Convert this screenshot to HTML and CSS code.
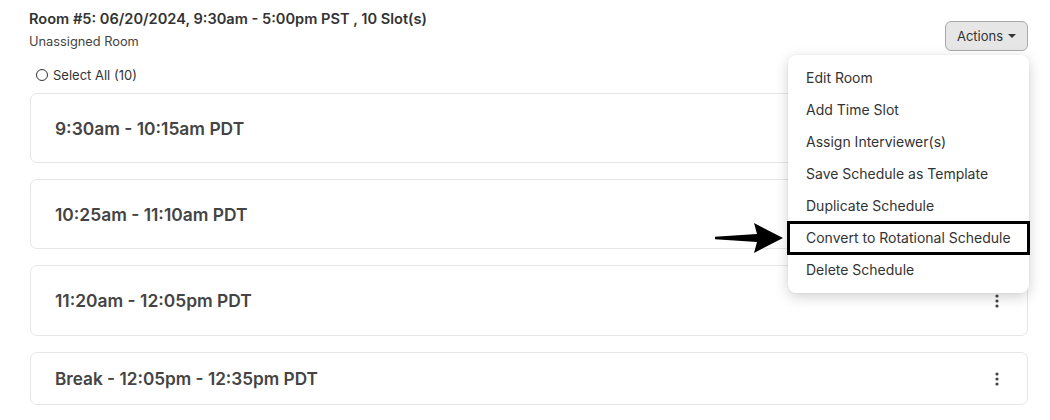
FILE: index.html
```html
<!DOCTYPE html>
<html lang="en">
<head>
  <meta charset="UTF-8" />
  <title>Room Schedule</title>
  <link rel="stylesheet" href="styles.css">
</head>
<body>

  <div class="room">
    <div class="room-head">
      <div class="room-info">
        <h3>Room #5: 06/20/2024, 9:30am - 5:00pm PST , 10 Slot(s)</h3>
        <div class="room-sub">Unassigned Room</div>
      </div>
      <button class="actions-btn">Actions <span class="caret"></span></button>
    </div>

    <label class="select-all"><span class="radio"></span> Select All (10)</label>

    <div class="slots">
      <div class="slot">
        <span>9:30am - 10:15am PDT</span>
        <svg class="kebab" width="4" height="14" viewBox="0 0 4 14"><circle cx="2" cy="2" r="1.6"/><circle cx="2" cy="7" r="1.6"/><circle cx="2" cy="12" r="1.6"/></svg>
      </div>
      <div class="slot">
        <span>10:25am - 11:10am PDT</span>
        <svg class="kebab" width="4" height="14" viewBox="0 0 4 14"><circle cx="2" cy="2" r="1.6"/><circle cx="2" cy="7" r="1.6"/><circle cx="2" cy="12" r="1.6"/></svg>
      </div>
      <div class="slot">
        <span>11:20am - 12:05pm PDT</span>
        <svg class="kebab" width="4" height="14" viewBox="0 0 4 14"><circle cx="2" cy="2" r="1.6"/><circle cx="2" cy="7" r="1.6"/><circle cx="2" cy="12" r="1.6"/></svg>
      </div>
      <div class="slot slot-break">
        <span>Break - 12:05pm - 12:35pm PDT</span>
        <svg class="kebab" width="4" height="14" viewBox="0 0 4 14"><circle cx="2" cy="2" r="1.6"/><circle cx="2" cy="7" r="1.6"/><circle cx="2" cy="12" r="1.6"/></svg>
      </div>
    </div>

    <!-- open actions menu -->
    <ul class="menu">
      <li>Edit Room</li>
      <li>Add Time Slot</li>
      <li>Assign Interviewer(s)</li>
      <li>Save Schedule as Template</li>
      <li>Duplicate Schedule</li>
      <li class="marked">Convert to Rotational Schedule</li>
      <li>Delete Schedule</li>
    </ul>

    <!-- annotation arrow -->
    <svg class="pointer" width="70" height="32" viewBox="0 0 70 32">
      <path d="M0 14.8 L42 12 L39 1 L68 16 L39 31 L42 20 L0 17.2 Z" fill="#000"/>
    </svg>
  </div>

</body>
</html>
```

FILE: styles.css
```css
* {
  margin: 0;
  padding: 0;
  box-sizing: border-box;
}

body {
  font-family: Inter, 'Noto Sans', sans-serif;
  background: #fff;
  color: #333;
}

.room {
  position: relative;
  padding: 10px 22px 0 30px;
}

.room-head {
  display: flex;
  justify-content: space-between;
  align-items: flex-start;
}

.room-info h3 {
  font-size: 14.6px;
  font-weight: 600;
  color: #333;
  margin-left: -1px;
  line-height: 18px;
}

.room-sub {
  font-size: 12.8px;
  color: #444;
  margin-top: 6px;
  margin-left: -1px;
}

.actions-btn {
  margin-top: 11px;
  width: 83px;
  height: 30px;
  background: #e6e6e6;
  border: 1px solid #a9a9a9;
  border-radius: 6px;
  font-family: inherit;
  font-size: 13px;
  color: #333;
  display: flex;
  align-items: center;
  justify-content: center;
  gap: 5px;
}

.caret {
  width: 0;
  height: 0;
  border-left: 4px solid transparent;
  border-right: 4px solid transparent;
  border-top: 4px solid #333;
}

.select-all {
  display: flex;
  align-items: center;
  gap: 5px;
  font-size: 13px;
  color: #333;
  margin-top: 14px;
  margin-left: 6px;
  height: 20px;
}

.radio {
  width: 12px;
  height: 12px;
  border: 1px solid #333;
  border-radius: 50%;
}

.slots {
  margin-top: 8px;
  display: flex;
  flex-direction: column;
  gap: 16px;
}

.slot {
  height: 70px;
  border: 1px solid #e6e6e6;
  border-radius: 7px;
  padding: 0 28px 0 24px;
  display: flex;
  align-items: center;
  justify-content: space-between;
  font-size: 17.4px;
  font-weight: 600;
  color: #444;
}

.slot:nth-child(3) {
  height: 71px;
}

.slot-break {
  height: 53px;
  font-size: 17.2px;
}

.kebab {
  fill: #444;
}

.menu {
  position: absolute;
  top: 55px;
  left: 788px;
  width: 241px;
  list-style: none;
  background: #fff;
  border-radius: 8px;
  padding: 7px 0;
  box-shadow: 0 4px 14px rgba(0, 0, 0, 0.18), 0 0 2px rgba(0, 0, 0, 0.08);
}

.menu li {
  height: 32px;
  line-height: 32px;
  padding-left: 18px;
  font-size: 14px;
  color: #333;
}

.menu li.marked {
  outline: 3px solid #000;
  outline-offset: -2px;
}

.pointer {
  position: absolute;
  top: 222px;
  left: 715px;
}
```
